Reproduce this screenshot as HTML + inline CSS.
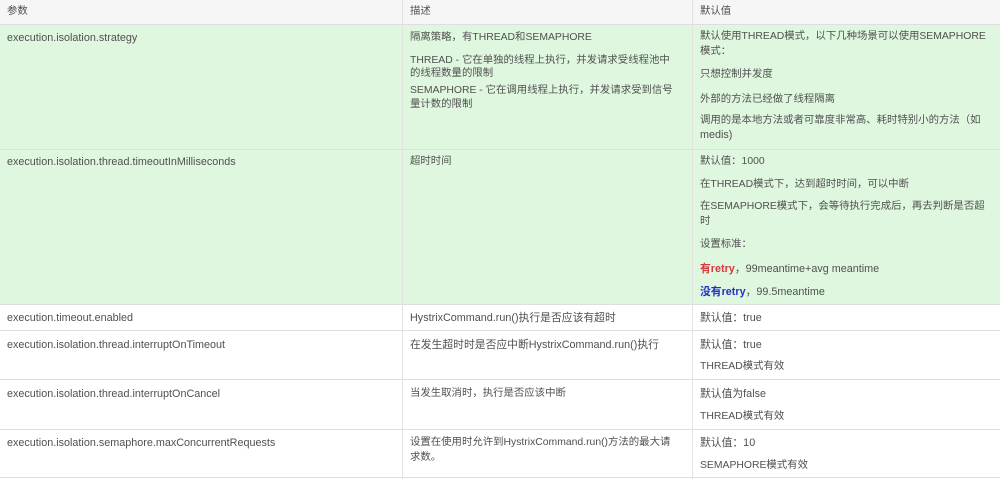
<!DOCTYPE html>
<html><head><meta charset="utf-8"><style>
body{margin:0;width:1000px;height:483px;background:#fff;position:relative;overflow:hidden;font-family:"Liberation Sans","Noto Sans CJK SC",sans-serif;font-size:10.8px;color:#505050}
.r{position:absolute;left:0;width:1000px;border-bottom:1px solid #dedede}
.v{position:absolute;top:0;width:1px;height:479px;background:#e2e2e2}
.t{position:absolute;white-space:nowrap;line-height:14px}
.cj{font-size:10.4px}
.red{color:#d9363e;font-weight:bold}.blue{color:#2630c8;font-weight:bold}
</style></head><body>
<div class="r" style="top:0;height:24px;background:#f6f6f6"></div>
<div class="r" style="top:25px;height:124px;background:#dff7df"></div>
<div class="r" style="top:150px;height:154px;background:#dff7df"></div>
<div class="r" style="top:305px;height:25px"></div>
<div class="r" style="top:331px;height:48px"></div>
<div class="r" style="top:380px;height:49px"></div>
<div class="r" style="top:430px;height:47px"></div>
<div class="v" style="left:402px"></div>
<div class="v" style="left:692px"></div>

<div class="t cj" style="left:7px;top:5px">参数</div>
<div class="t cj" style="left:410px;top:5px">描述</div>
<div class="t cj" style="left:700px;top:5px">默认值</div>

<div class="t" style="left:7px;top:31px">execution.isolation.strategy</div>
<div class="t cj" style="left:410px;top:31px">隔离策略，有THREAD和SEMAPHORE</div>
<div class="t cj" style="left:410px;top:54px">THREAD - 它在单独的线程上执行，并发请求受线程池中</div>
<div class="t cj" style="left:410px;top:67px">的线程数量的限制</div>
<div class="t cj" style="left:410px;top:84px">SEMAPHORE - 它在调用线程上执行，并发请求受到信号</div>
<div class="t cj" style="left:410px;top:98px">量计数的限制</div>
<div class="t cj" style="left:700px;top:30px">默认使用THREAD模式，以下几种场景可以使用SEMAPHORE</div>
<div class="t cj" style="left:700px;top:45px">模式：</div>
<div class="t cj" style="left:700px;top:68px">只想控制并发度</div>
<div class="t cj" style="left:700px;top:93px">外部的方法已经做了线程隔离</div>
<div class="t cj" style="left:700px;top:114px">调用的是本地方法或者可靠度非常高、耗时特别小的方法（如</div>
<div class="t" style="left:700px;top:128px">medis)</div>

<div class="t" style="left:7px;top:155px">execution.isolation.thread.timeoutInMilliseconds</div>
<div class="t cj" style="left:410px;top:155px">超时时间</div>
<div class="t cj" style="left:700px;top:155px">默认值：1000</div>
<div class="t cj" style="left:700px;top:178px">在THREAD模式下，达到超时时间，可以中断</div>
<div class="t cj" style="left:700px;top:200px">在SEMAPHORE模式下，会等待执行完成后，再去判断是否超</div>
<div class="t cj" style="left:700px;top:215px">时</div>
<div class="t cj" style="left:700px;top:238px">设置标准：</div>
<div class="t" style="left:700px;top:262px"><span class="red">有retry</span>，99meantime+avg meantime</div>
<div class="t" style="left:700px;top:285px"><span class="blue">没有retry</span>，99.5meantime</div>

<div class="t" style="left:7px;top:311px">execution.timeout.enabled</div>
<div class="t" style="left:410px;top:311px">HystrixCommand.run()执行是否应该有超时</div>
<div class="t" style="left:700px;top:311px">默认值：true</div>

<div class="t" style="left:7px;top:338px">execution.isolation.thread.interruptOnTimeout</div>
<div class="t" style="left:410px;top:338px">在发生超时时是否应中断HystrixCommand.run()执行</div>
<div class="t" style="left:700px;top:338px">默认值：true</div>
<div class="t cj" style="left:700px;top:360px">THREAD模式有效</div>

<div class="t" style="left:7px;top:387px">execution.isolation.thread.interruptOnCancel</div>
<div class="t cj" style="left:410px;top:387px">当发生取消时，执行是否应该中断</div>
<div class="t" style="left:700px;top:387px">默认值为false</div>
<div class="t cj" style="left:700px;top:410px">THREAD模式有效</div>

<div class="t" style="left:7px;top:436px">execution.isolation.semaphore.maxConcurrentRequests</div>
<div class="t cj" style="left:410px;top:436px">设置在使用时允许到HystrixCommand.run()方法的最大请</div>
<div class="t cj" style="left:410px;top:451px">求数。</div>
<div class="t" style="left:700px;top:436px">默认值：10</div>
<div class="t cj" style="left:700px;top:459px">SEMAPHORE模式有效</div>
</body></html>
